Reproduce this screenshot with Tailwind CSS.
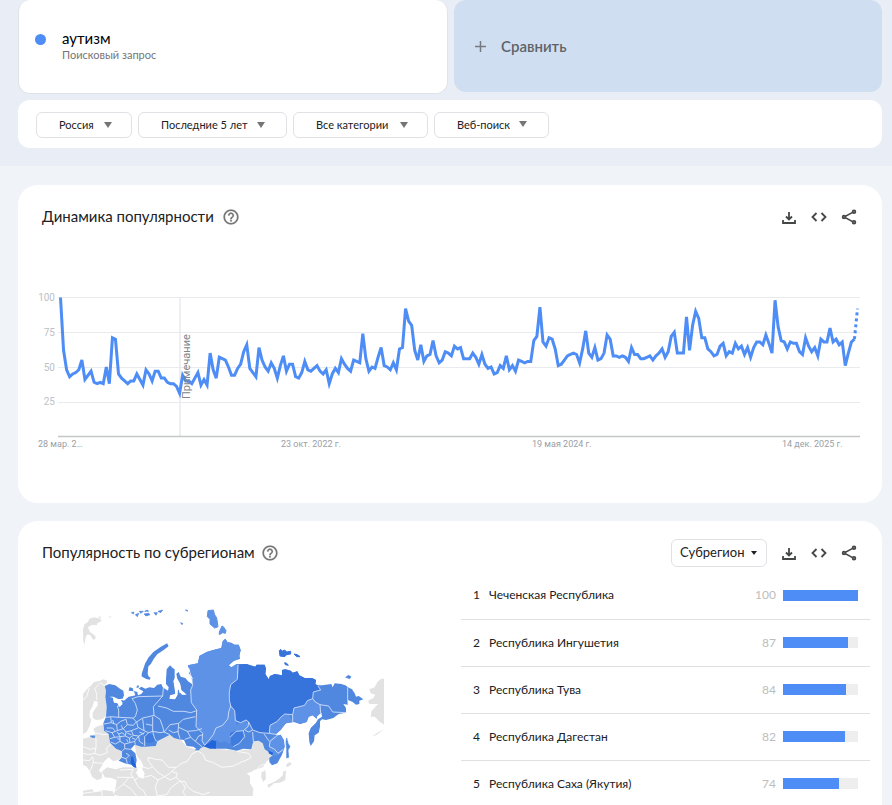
<!DOCTYPE html>
<html lang="ru">
  <head>
    <meta charset="UTF-8">
    <meta name="viewport" content="width=device-width, initial-scale=1.0">
    <title>аутизм - Анализ</title>
    <script src="https://cdn.jsdelivr.net/npm/@tailwindcss/browser@4"></script>
  </head>
  <body class="bg-[#f0f4f9] font-['Lato','Roboto',sans-serif] text-[#202124]">
    <svg class="hidden">
      <symbol id="icon-help" viewBox="0 0 24 24"><path stroke="currentColor" stroke-width=".3" d="M11 18h2v-2h-2v2zm1-16C6.480 2 2 6.480 2 12s4.480 10 10 10 10-4.480 10-10S17.520 2 12 2zm0 18c-4.410 0-8-3.590-8-8s3.590-8 8-8 8 3.590 8 8-3.590 8-8 8zm0-14c-2.210 0-4 1.790-4 4h2c0-1.100.900-2 2-2s2 .900 2 2c0 2-3 1.750-3 5h2c0-2.250 3-2.500 3-5 0-2.210-1.790-4-4-4z"/></symbol>
      <symbol id="icon-download" viewBox="0 0 16 16"><path d="M8 3v7.500M5 7.500l3 3 3-3M2 11v3h12v-3" fill="none" stroke="currentColor" stroke-width="1.800"/></symbol>
      <symbol id="icon-embed" viewBox="0 0 16 16"><path d="M5.500 4 1.500 8l4 4M10.500 4l4 4-4 4" fill="none" stroke="currentColor" stroke-width="1.800"/></symbol>
      <symbol id="icon-share" viewBox="0 0 16 16"><path d="M13 2.700 3 8l10 5.300" fill="none" stroke="currentColor" stroke-width="1.500"/><g fill="#80868b" stroke="currentColor" stroke-width="1.500"><circle cx="13" cy="2.700" r="1.500"/><circle cx="3" cy="8" r="1.500"/><circle cx="13" cy="13.300" r="1.500"/></g></symbol>
    </svg>

    <header class="bg-[#e9eef6] pl-[18px] pr-[10px] pb-[18px]">
      <div class="grid grid-cols-[430fr_428fr] gap-[6px]">
        <div class="h-[94px] bg-white border border-t-0 border-[#e0e3e8] rounded-xl flex pl-4 pt-7">
          <span class="size-[11px] rounded-full bg-[#4e8df6] mt-[6px] mr-4"></span>
          <div>
            <p class="text-[15px] leading-5 text-black">аутизм</p>
            <p class="text-[11px] leading-[14px] text-[#757575]">Поисковый запрос</p>
          </div>
        </div>
        <button class="h-[92px] bg-[#d0def1] rounded-xl flex items-center gap-[14px] pl-5 text-[15px] font-semibold text-[#5f6368]">
          <svg class="size-[13px]" viewBox="0 0 13 13"><path d="M6.500 1v11M1 6.500h11" stroke="#757b83" stroke-width="1.500"/></svg>
          Сравнить
        </button>
      </div>

      <div class="mt-[6px] h-12 bg-white rounded-xl flex items-start gap-[6px] px-[18px] pt-[11px]">
        <div class="relative">
          <select aria-label="Регион" class="appearance-none h-[26px] w-24 pl-[22px] border border-[#dfe1e5] rounded-md text-[11px]"><option>Россия</option></select>
          <svg class="absolute right-5 top-[11px] w-2 h-[6px] pointer-events-none" viewBox="0 0 8 6"><path d="M0 0h8L4 6z" fill="#757575"/></svg>
        </div>
        <div class="relative">
          <select aria-label="Период" class="appearance-none h-[26px] w-[149px] pl-[22px] border border-[#dfe1e5] rounded-md text-[11px]"><option>Последние 5 лет</option></select>
          <svg class="absolute right-[22px] top-[11px] w-2 h-[6px] pointer-events-none" viewBox="0 0 8 6"><path d="M0 0h8L4 6z" fill="#757575"/></svg>
        </div>
        <div class="relative">
          <select aria-label="Категория" class="appearance-none h-[26px] w-[135px] pl-[22px] border border-[#dfe1e5] rounded-md text-[11px]"><option>Все категории</option></select>
          <svg class="absolute right-5 top-[11px] w-2 h-[6px] pointer-events-none" viewBox="0 0 8 6"><path d="M0 0h8L4 6z" fill="#757575"/></svg>
        </div>
        <div class="relative">
          <select aria-label="Тип поиска" class="appearance-none h-[26px] w-[115px] pl-[22px] border border-[#dfe1e5] rounded-md text-[11px]"><option>Веб-поиск</option></select>
          <svg class="absolute right-[22px] top-[10px] w-2 h-[6px] pointer-events-none" viewBox="0 0 8 6"><path d="M0 0h8L4 6z" fill="#757575"/></svg>
        </div>
      </div>
    </header>

    <main class="pl-[18px] pr-[10px] pt-[19px] flex flex-col gap-[18px]">
      <section class="bg-white rounded-[20px] pt-4 pb-[46px]">
        <div class="flex items-center h-8 pl-6 pr-[25px]">
          <h2 class="text-[15px] pb-[2px]">Динамика популярности</h2>
          <button aria-label="Справка" class="ml-2 pb-px text-[#757575]"><svg class="size-[18px]" fill="currentColor"><use href="#icon-help"/></svg></button>
          <div class="ml-auto flex gap-[14px] text-[#444746]">
            <button aria-label="Скачать"><svg class="size-4"><use href="#icon-download"/></svg></button>
            <button aria-label="Встроить"><svg class="size-4"><use href="#icon-embed"/></svg></button>
            <button aria-label="Поделиться"><svg class="size-4"><use href="#icon-share"/></svg></button>
          </div>
        </div>

        <svg class="w-full h-auto mt-[47px] font-['Roboto',sans-serif]" viewBox="0 0 864 177">
          <g stroke="#e8eaed">
            <path d="M40 17.500h802M40 52.500h802M40 87.500h802M40 122.500h802"/>
            <path d="M162 17v139" stroke-width="1.500"/>
            <path d="M40 156.500h802" stroke="#c4c7c5" stroke-width="1.500"/>
          </g>
          <g fill="#bdc1c6" font-size="10" text-anchor="end">
            <text x="37" y="21">100</text>
            <text x="37" y="56">75</text>
            <text x="37" y="91">50</text>
            <text x="37" y="125">25</text>
          </g>
          <g fill="#9aa0a6" font-size="9">
            <text x="20" y="167">28 мар. 2…</text>
            <text x="263" y="167">23 окт. 2022 г.</text>
            <text x="514" y="167">19 мая 2024 г.</text>
            <text x="764" y="167">14 дек. 2025 г.</text>
          </g>
          <polyline id="line" fill="none" stroke="#4e8df6" stroke-width="3"/>
          <polyline id="forecast" fill="none" stroke="#4e8df6" stroke-width="3" stroke-dasharray="3 3"/>
          <text transform="translate(172 119) rotate(-90)" fill="#80868b" font-size="11">Примечание</text>
        </svg>
      </section>

      <section class="bg-white rounded-[20px] pt-4 pb-8">
        <div class="flex items-center h-8 pl-6 pr-[25px]">
          <h2 class="text-[15px] pb-[2px]">Популярность по субрегионам</h2>
          <button aria-label="Справка" class="ml-[6px] text-[#757575]"><svg class="size-[18px]" fill="currentColor"><use href="#icon-help"/></svg></button>
          <div class="ml-auto flex items-center gap-[14px] text-[#444746]">
            <div class="relative">
              <select aria-label="Разрешение" class="appearance-none h-7 w-24 pl-2 border border-[#dfe1e5] rounded-md text-[13px] text-[#202124]"><option>Субрегион</option></select>
              <svg class="absolute right-[10px] top-3 w-[6px] h-1 pointer-events-none" viewBox="0 0 6 4"><path d="M0 0h6L3 4z" fill="#202124"/></svg>
            </div>
            <button aria-label="Скачать"><svg class="size-4"><use href="#icon-download"/></svg></button>
            <button aria-label="Встроить"><svg class="size-4"><use href="#icon-embed"/></svg></button>
            <button aria-label="Поделиться"><svg class="size-4"><use href="#icon-share"/></svg></button>
          </div>
        </div>

        <div class="flex items-start pr-3">
          <div class="flex-1 pl-[65px] pt-[39px]">
            <svg class="w-[301px] h-[188px]" viewBox="39 24 903 564">
              <!-- соседние страны -->
              <g fill="#e2e2e2">
                <path d="M39 282 54 264 62 258 72 246 90 242 100 238 112 242 110 250 103 256 108 272 106 290 110 320 108 348 96 358 78 360 68 354 68 338 76 326 84 314 82 304 72 304 68 318 60 332 58 348 64 360 58 380 50 396 39 402Z"/>
                <path d="M39 416 56 412 76 410 74 398 70 386 84 378 98 374 102 392 116 402 120 428 138 446 156 454 156 472 144 480 130 484 116 472 104 482 94 500 86 512 98 520 94 536 80 540 66 530 60 514 50 500 39 494Z"/>
                <path d="M96 514 112 502 136 508 160 502 186 502 204 506 198 518 206 532 220 536 224 520 216 506 220 498 214 484 202 470 198 458 194 434 232 442 260 438 262 424 300 404 330 416 350 440 384 450 402 438 440 446 500 452 546 448 550 424 566 422 578 430 584 448 608 464 600 478 590 484 580 500 562 508 552 510 544 516 530 520 540 528 540 550 550 566 548 588 148 588 132 584 136 566 140 540 124 534 104 532Z"/>
                <path d="M39 572 66 568 74 576 100 570 128 574 134 588 39 588Z"/>
                <path d="M574 518 586 510 588 536 580 546 574 534ZM640 514 648 512 646 540 630 548 612 550 596 564 592 554 612 546 630 534 638 526ZM650 492 658 486 666 492 654 500 648 500Z"/>
                <path d="M942 236 934 236 922 246 914 262 898 268 902 280 916 284 910 294 894 302 898 312 924 312 904 334 902 350 914 350 930 366 942 374ZM942 388 920 404 904 410 922 398Z"/>
                <path d="M44 72 54 66 58 56 72 52 92 56 94 64 82 70 80 76 66 74 54 82 60 96 74 106 78 114 70 120 60 104 50 104 46 116 44 134 40 124 39 88ZM86 48 96 52 88 54ZM116 50l10-2-8 6Z"/>
              </g>
              <g fill="none" stroke="#fff" stroke-width="2.500">
                <path d="M39 300 50 290 58 264M80 300 80 280 74 266 92 248 108 262M39 440 60 448 78 444 78 412M78 444 74 460 90 466 112 458 110 444 124 432M39 460 56 464 74 460M60 514 70 488 68 470M70 488 100 490M39 480 58 482 68 470M74 398 100 404 116 402M150 510 190 508 182 522 194 540 204 534M140 532 190 532M176 534 160 552 134 574M160 552 182 566 200 588M194 540 204 560 222 574 228 588"/>
                <path d="M216 500 236 506 248 500 236 484 234 472 256 478 276 480 296 502 320 502 334 490 352 484 366 462 384 452M248 500 262 516 284 530 300 520 318 502M220 532 244 526 264 540 256 560 262 588M264 540 284 530 300 540 318 532 322 520 306 514M262 588 290 584 304 562 318 552 328 544M318 532 340 552 346 564 338 576 348 588M328 544 344 544 352 560 370 574 400 584 420 576M384 452 400 464 406 480 430 488 456 502 490 498 510 488 530 480 544 472 536 460 500 454M590 492 572 496 560 508M39 580 96 572 96 588"/>
              </g>

              <!-- Россия -->
              <g fill="#5088e0">
                <path d="M104 258 118 252 136 256 150 266 160 272 162 286 158 296 146 298 130 290 118 290 130 294 132 308 144 310 150 320 158 308 150 298 162 302 176 290 188 288 196 286 192 274 176 272 178 262 188 264 190 272 202 276 204 286 214 282 220 274 206 266 214 260 226 266 238 262 252 264 262 254 274 252 278 262 294 272 296 262 288 252 288 238 290 208 300 196 308 204 314 208 314 234 310 244 314 262 316 282 300 286 300 294 316 296 322 284 322 264 326 262 328 278 342 284 346 280 330 272 332 258 320 240 318 222 326 216 332 230 346 234 354 244 366 252 366 238 354 222 354 196 384 190 388 168 410 156 430 150 454 144 458 124 466 116 472 126 484 128 494 134 506 134 512 150 508 168 510 176 492 182 476 196 484 202 500 192 530 192 538 196 556 200 560 194 584 194 588 206 586 222 596 238 600 228 614 222 636 226 636 210 646 208 662 212 668 218 682 214 688 226 704 234 726 234 738 240 736 252 744 256 756 256 784 252 788 262 794 250 814 252 826 256 834 262 846 268 854 280 858 290 866 288 880 298 868 302 868 312 858 314 848 306 834 300 834 314 820 312 828 324 828 338 806 342 790 354 768 360 756 358 750 364 750 380 746 398 734 406 732 424 722 438 718 426 716 400 722 384 738 368 744 358 756 350 754 338 742 344 740 356 728 346 716 350 710 366 690 372 672 366 648 370 640 378 632 390 618 402 620 408 632 404 640 420 644 440 636 464 622 490 606 496 598 486 598 474 608 466 596 456 584 448 578 430 566 422 550 424 544 448 520 446 500 452 470 446 440 446 402 438 384 450 370 440 350 438 342 420 326 418 312 414 300 404 262 424 258 438 232 440 214 440 194 434 182 448 196 460 200 480 196 504 184 494 164 490 146 482 156 472 156 454 138 446 120 428 116 402 102 392 100 370 108 350 110 320 106 290 108 272Z"/>
                <path stroke="#5088e0" stroke-width="6" d="M218 222 228 192 238 174 252 158 272 144 290 134 292 138 276 150 260 160 248 176 240 190 232 198 230 222 234 232 240 236 230 234 218 228Z"/>
                <path d="M184 38 192 36 190 42ZM196 44l10-4-4 10ZM208 34l12 0-8 6ZM222 42l14-2 4 4-12 4ZM224 34l8-4 4 4ZM252 38l10 0-4 8ZM264 34l14-4-6 8ZM346 30l6 0 0 4ZM332 68l6 2-2 4ZM60 408 74 407 74 413 66 412ZM200 262l4-6 2 6ZM827 232l8-6 8 4-4 6Z" stroke="#5088e0" stroke-width="2"/>
              </g>
              <!-- Красноярский край -->
              <g fill="#5e92e7">
                <path d="M354 196 384 190 388 168 410 156 430 150 454 144 458 124 466 116 472 126 494 134 506 134 512 150 508 168 510 176 492 182 476 196 484 202 500 192 504 216 502 238 482 254 478 276 476 300 482 318 476 336 474 356 458 376 438 384 430 404 412 424 404 436 396 422 398 400 378 380 380 330 364 308 362 270 368 256 366 238 354 222Z"/>
                <path d="M482 318 492 330 494 352 500 376 512 366 528 362 534 380 520 392 498 394 490 410 478 432 466 424 448 428 442 420 414 424 430 404 438 384 458 376 474 356 476 336Z"/>
                <path stroke="#5e92e7" stroke-width="3" d="M414 32 430 30 434 44 440 54 444 80 434 84 420 72 420 58 412 50ZM456 78 460 80 468 92 466 100 458 98 448 104 448 96Z"/>
                <path d="M668 348 672 326 704 314 712 300 732 300 750 314 752 340 740 350 740 356 728 346 716 350 710 366 690 372 668 362ZM598 402 600 376 622 364 632 350 646 342 658 346 668 366 648 370 632 390 618 402ZM598 424 608 410 632 404 642 420 644 440 636 460 614 468 598 456Z"/>
              </g>
              <!-- Якутия -->
              <g fill="#3674dc">
                <path d="M504 194 530 192 556 200 560 194 584 194 588 206 586 222 596 238 600 228 614 222 636 226 636 210 646 208 662 212 668 218 682 214 688 226 704 234 726 234 738 240 736 252 744 258 752 270 730 276 728 296 712 302 704 316 672 324 668 344 644 342 632 352 622 364 600 376 598 400 570 398 548 390 536 366 528 360 512 368 500 362 494 330 484 318 478 300 478 276 482 254 502 238 506 216Z"/>
                <path stroke="#3674dc" stroke-width="3" d="M628 152 632 148 636 154 644 150 650 156 662 154 662 162 650 164 644 170 630 168ZM672 162 682 164 690 170 680 170ZM644 188 650 190 655 196 646 194Z"/>
              </g>
              <path fill="#2264dc" d="M398 438 418 428 426 420 438 424 438 446 420 446ZM184 468 190 472 192 482 200 504 190 500 182 490ZM596 452l14 6-4 8-10-6Z"/>
              <path fill="#407bdf" d="M480 398 500 392 524 390 524 408 512 428 496 440 484 436ZM224 402 238 400 256 410 254 424 236 430 224 422Z"/>
              <path fill="#5088e0" stroke="#5088e0" stroke-width="2" d="M650 414 654 430 660 440 654 450 656 472 650 474 650 446 648 426ZM376 450l8-6 4 6Z"/>

              <!-- границы регионов -->
              <g fill="none" stroke="#dbe7fb" stroke-width="2.500" stroke-linejoin="round">
                <path d="M356 204 366 238 368 256 362 270 364 308 380 330 378 380 398 400 396 422 404 436 414 424 430 404 438 384 458 376 474 356 476 336 482 318 494 332 496 362 512 368 528 360 536 366 548 390 570 398 598 400 600 376 622 364 632 352 644 342 668 344 672 324 704 316 712 302 728 296 730 276 752 270 744 258M482 318 478 300 478 276 482 254 502 238 504 194M728 296 736 306 750 314 752 340M750 314 776 318 788 336 828 338M833 262V300L834 314M668 344 668 366M598 400 622 404M536 366 534 380 520 392 498 394 480 412M520 392 524 410 508 430 490 440M524 390 536 396 548 390M548 396 550 424M598 424 582 402M620 408 600 424 598 440 614 448 624 460 640 448"/>
                <path d="M108 352 124 350 146 352 146 330 142 318 150 318M146 352 190 354 196 350 202 330 196 310 186 296 204 290 278 288 280 264M278 288 264 304 250 320 252 346 236 350 218 354 200 366 188 354M264 318 290 324 310 334 342 334 362 338 380 332M252 346 270 358 278 380 282 396 300 374 326 370 340 358 376 350M326 370 324 396 330 416M326 382 352 394 376 392 396 386M352 394 362 412 376 424 396 440M376 424 386 408 398 404M344 418 362 412M248 350 248 394 270 398 282 396M218 356 222 392 236 398 248 394M222 392 204 382 200 366M282 396 300 404M248 394 254 416 260 424M236 398 224 410 224 438"/>
                <path d="M102 372 124 368 140 374 152 364 168 358M124 368 122 350M140 374 142 392 126 398 106 392M142 392 160 386 172 374 190 376 198 366M160 386 168 396 184 392 204 384M172 374 168 358M184 392 190 406 206 408 224 398M168 396 166 408 150 410 142 396M166 408 178 414 190 406M178 414 180 428 194 424 206 408M180 428 164 432 150 424 150 410 134 412 126 398M134 412 120 416M150 424 136 432 122 426M164 432 164 446 156 454M164 446 182 448M206 408 208 424 220 432M194 424 196 434M156 472 168 476 178 466 168 460M168 476 172 490"/>
                <path d="M110 384h18l6 8M128 360l4 12M154 376l4 10M146 402l10-4 8 6M172 400l12 4M186 414l10 4M142 416l8 2M170 418l4 8M208 396l14 6M228 372l18 4M296 390l14 8 16-4"/>
              </g>
              <path fill="#fff" d="M318 218 322 236 330 250 334 270 350 284 336 284 324 268 322 286 314 298 298 296 300 288 316 282 312 250ZM354 200 360 212 356 220 370 236 362 234 350 222ZM130 292 142 298 156 296 152 306 158 312 148 320 140 306 130 304Z"/>
            </svg>
          </div>

          <table class="w-[409px] text-[12px] mt-[3px]">
            <tbody>
              <tr class="h-[47px] border-b border-[#e0e0e0]">
                <td class="w-7 pl-3">1</td><td>Чеченская Республика</td><td class="w-10 pr-[7px] text-right text-[#bdbdbd]">100</td>
                <td class="w-[87px] pr-3"><div class="h-[11px] bg-[#eeeeee]"><div class="h-full bg-[#4e8df6]" style="width:100%"></div></div></td>
              </tr>
              <tr class="h-[47px] border-b border-[#e0e0e0]">
                <td class="pl-3">2</td><td>Республика Ингушетия</td><td class="pr-[7px] text-right text-[#bdbdbd]">87</td>
                <td class="pr-3"><div class="h-[11px] bg-[#eeeeee]"><div class="h-full bg-[#4e8df6]" style="width:87%"></div></div></td>
              </tr>
              <tr class="h-[47px] border-b border-[#e0e0e0]">
                <td class="pl-3">3</td><td>Республика Тува</td><td class="pr-[7px] text-right text-[#bdbdbd]">84</td>
                <td class="pr-3"><div class="h-[11px] bg-[#eeeeee]"><div class="h-full bg-[#4e8df6]" style="width:84%"></div></div></td>
              </tr>
              <tr class="h-[47px] border-b border-[#e0e0e0]">
                <td class="pl-3">4</td><td>Республика Дагестан</td><td class="pr-[7px] text-right text-[#bdbdbd]">82</td>
                <td class="pr-3"><div class="h-[11px] bg-[#eeeeee]"><div class="h-full bg-[#4e8df6]" style="width:82%"></div></div></td>
              </tr>
              <tr class="h-[47px]">
                <td class="pl-3">5</td><td>Республика Саха (Якутия)</td><td class="pr-[7px] text-right text-[#bdbdbd]">74</td>
                <td class="pr-3"><div class="h-[11px] bg-[#eeeeee]"><div class="h-full bg-[#4e8df6]" style="width:74%"></div></div></td>
              </tr>
            </tbody>
          </table>
        </div>
      </section>
    </main>

    <script>
      // значения по неделям
      const weeks = [
        100,62,48,43,45,46,48,55,41,44,47,39,38,39,38,50,38,71,70,45,42,40,38,40,40,45,41,37,48,45,
        40,47,47,42,42,39,38,38,36,31,44,40,40,38,42,46,37,41,37,60,48,42,57,56,55,50,44,44,49,52,
        61,66,49,46,43,64,55,50,47,53,49,42,51,58,47,52,52,43,42,46,54,48,47,49,51,47,45,48,38,45,
        49,46,56,52,49,47,55,54,53,74,56,47,50,49,57,64,51,50,48,53,48,63,64,92,83,80,62,55,66,54,
        58,59,69,58,53,55,61,60,58,65,63,64,56,56,56,60,57,52,59,52,49,50,45,46,51,49,58,48,51,47,
        55,54,53,54,54,69,72,93,68,65,71,70,63,51,52,55,58,59,60,59,53,63,76,60,57,64,55,56,60,73,
        70,58,58,57,58,57,54,64,59,59,56,56,57,58,55,58,60,63,57,61,72,75,60,60,60,86,62,80,90,85,
        71,71,63,61,58,59,65,67,58,61,60,67,63,65,59,64,57,64,68,68,66,73,67,60,98,79,69,68,63,68,
        67,67,61,59,71,65,61,64,58,70,68,68,78,68,70,66,68,51,60,68,70,92
      ];
      const step = 797 / (weeks.length - 1);
      const points = weeks.map((v, i) => `${42.5 + i * step},${156.5 - v * 1.39}`);
      document.getElementById("line").setAttribute("points", points.slice(0, -1).join(" "));
      document.getElementById("forecast").setAttribute("points", points.slice(-2).join(" "));
    </script>
  </body>
</html>
